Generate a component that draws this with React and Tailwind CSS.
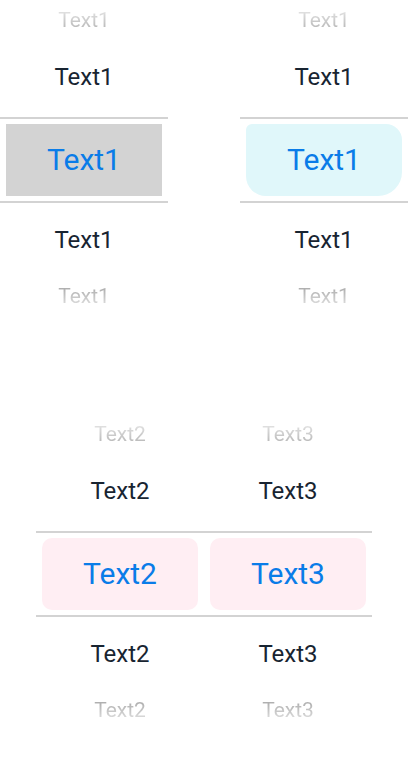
const font = { fontFamily: "Roboto, 'Noto Sans', sans-serif" };

function Row({ columns, height, kind }) {
  const base = "text-center leading-none whitespace-nowrap";
  const styles = {
    fadeTop:
      "text-[21px] bg-linear-to-b from-[#e4e4e4] to-[#b4b4b4] bg-clip-text text-transparent",
    fadeBottom:
      "text-[21px] bg-linear-to-b from-[#a9a9a9] to-[#e2e2e2] bg-clip-text text-transparent",
    normal: "text-[24px] text-[#182431]",
  };
  return (
    <div className={`flex ${height}`}>
      {columns.map((c, i) => (
        <div key={i} className="flex flex-1 items-center justify-center">
          <span className={`${base} ${styles[kind]}`}>{c.label}</span>
        </div>
      ))}
    </div>
  );
}

function Picker({ columns, className }) {
  return (
    <div className={`flex flex-col ${className}`}>
      <Row columns={columns} height="h-[40px]" kind="fadeTop" />
      <Row columns={columns} height="h-[74px]" kind="normal" />
      <div className="h-[3px]" />
      <div className="h-[2px] bg-[#d3d3d3]" />
      <div className="flex h-[82px]">
        {columns.map((c, i) => (
          <div key={i} className="flex flex-1 items-center px-[6px]">
            <div
              className={`flex h-[72px] w-full items-center justify-center ${c.box}`}
            >
              <span className="text-[30px] font-normal leading-none text-[#0a7ce8]">
                {c.label}
              </span>
            </div>
          </div>
        ))}
      </div>
      <div className="h-[2px] bg-[#d3d3d3]" />
      <Row columns={columns} height="h-[74px]" kind="normal" />
      <Row columns={columns} height="h-[39px]" kind="fadeBottom" />
    </div>
  );
}

export default function App() {
  return (
    <div className="min-h-[764px] w-[416px] bg-white" style={font}>
      <div className="flex gap-[72px]">
        <Picker
          className="w-[168px]"
          columns={[{ label: "Text1", box: "bg-[#d3d3d3]" }]}
        />
        <Picker
          className="w-[168px]"
          columns={[
            {
              label: "Text1",
              box: "bg-[#e0f7fa] rounded-tl-[6px] rounded-tr-[16px] rounded-bl-[20px] rounded-br-[24px]",
            },
          ]}
        />
      </div>
      <div className="mt-[98px] pl-[36px]">
        <Picker
          className="w-[336px]"
          columns={[
            { label: "Text2", box: "bg-[#ffeef3] rounded-[10px]" },
            { label: "Text3", box: "bg-[#ffeef3] rounded-[10px]" },
          ]}
        />
      </div>
    </div>
  );
}
